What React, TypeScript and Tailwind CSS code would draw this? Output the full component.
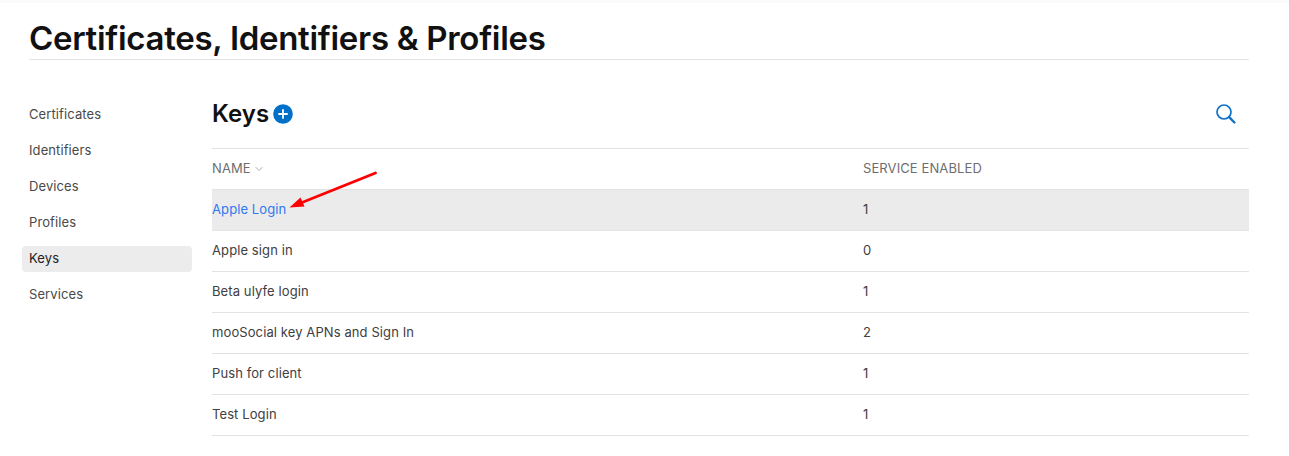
import { twMerge } from "tailwind-merge";

type KeyItem = {
  name: string;
  services: number;
};

const menu = ["Certificates", "Identifiers", "Devices", "Profiles", "Keys", "Services"];

const keys: KeyItem[] = [
  { name: "Apple Login", services: 1 },
  { name: "Apple sign in", services: 0 },
  { name: "Beta ulyfe login", services: 1 },
  { name: "mooSocial key APNs and Sign In", services: 2 },
  { name: "Push for client", services: 1 },
  { name: "Test Login", services: 1 },
];

function Sidebar({ active }: { active: string }) {
  return (
    <nav className="flex w-[170px] shrink-0 flex-col gap-2.5 pt-[42px]">
      {menu.map((item) => (
        <a
          key={item}
          className={twMerge(
            "flex h-[26px] items-center rounded px-[7px] text-[#494949]",
            item === active && "bg-[#ececec] text-[#222]",
          )}
        >
          {item}
        </a>
      ))}
    </nav>
  );
}

function AddButton() {
  return (
    <button aria-label="Add key">
      <svg width="20" height="20" viewBox="0 0 20 20">
        <circle cx="10" cy="10" r="9.8" fill="#0070c9" />
        <path d="M10 5.3v9.4M5.3 10h9.4" stroke="#fff" strokeWidth="1.8" />
      </svg>
    </button>
  );
}

function SearchButton() {
  return (
    <button aria-label="Search">
      <svg width="20" height="20" viewBox="0 0 20 20" fill="none" stroke="#0e72c8">
        <circle cx="8" cy="8" r="7" strokeWidth="1.7" />
        <path d="M13.2 13.2l5.2 5.3" strokeWidth="2.4" strokeLinecap="round" />
      </svg>
    </button>
  );
}

function Arrow() {
  return (
    <svg className="absolute top-[-20px] left-[76px]" width="92" height="42" viewBox="0 0 92 42">
      <path d="M87.500 3L14 32.500" stroke="#fe0000" strokeWidth="2.800" strokeLinecap="round" />
      <path d="M1.500 37.500L12.500 27.500L16.500 36.500Z" fill="#fe0000" />
    </svg>
  );
}

export default function App() {
  return (
    <div className="h-[456px] border-t-[3px] border-[#fafafa] bg-white font-['Inter',sans-serif] text-[13px] tracking-[0.1px] text-[#404040]">
      <header className="mr-10 ml-[29px] flex h-[57px] items-end border-b border-[#e3e3e3] pb-0.5">
        <h1 className="text-[33px] leading-[38px] font-semibold tracking-[-0.3px] text-[#111]">
          Certificates, Identifiers & Profiles
        </h1>
      </header>

      <div className="mr-10 ml-[22px] flex gap-5">
        <Sidebar active="Keys" />

        <main className="flex-1">
          <div className="flex h-[88px] items-center justify-between pt-5 pr-[13px]">
            <div className="flex items-center gap-1">
              <h2 className="text-[24px] leading-7 font-semibold text-[#111]">Keys</h2>
              <AddButton />
            </div>
            <SearchButton />
          </div>

          <div className="border-t border-[#e3e3e3]">
            <div className="flex h-[41px] items-center border-b border-[#e3e3e3] text-[#6e6e6e]">
              <div className="flex w-[651px] items-center gap-1">
                NAME
                <svg width="8" height="6" viewBox="0 0 8 6" fill="none" stroke="#aaa">
                  <path d="M.7 1.200L4 4.500L7.300 1.200" />
                </svg>
              </div>
              <div>SERVICE ENABLED</div>
            </div>
            {keys.map((item, index) => (
              <div
                key={item.name}
                className={twMerge(
                  "relative flex h-[41px] items-center border-b border-[#e3e3e3]",
                  index === 0 && "bg-[#ebebeb]",
                )}
              >
                <div className={twMerge("w-[651px]", index === 0 && "text-[#2f79ef]")}>{item.name}</div>
                <div>{item.services}</div>
                {index === 0 && <Arrow />}
              </div>
            ))}
          </div>
        </main>
      </div>
    </div>
  );
}
